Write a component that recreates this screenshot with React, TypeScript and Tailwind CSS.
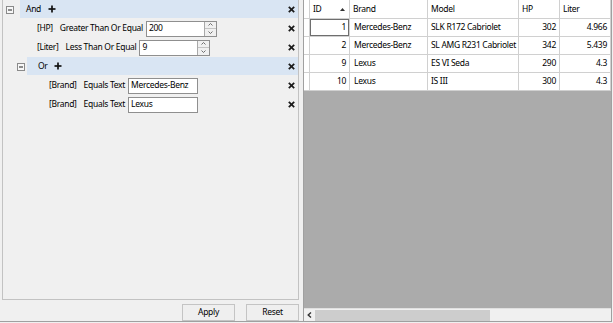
import React from "react";

const font = "font-['Noto_Sans',sans-serif] text-[8.5px] tracking-[-0.3px] text-black";

function Expand() {
  return (
    <svg width="8" height="8" viewBox="0 0 8 8">
      <rect x="0.5" y="0.5" width="7" height="7" fill="#f7f7f7" stroke="#8a8a8a" />
      <line x1="2" y1="4" x2="6" y2="4" stroke="#222" strokeWidth="1" />
    </svg>
  );
}

function Plus() {
  return (
    <svg width="8" height="8" viewBox="0 0 8 8">
      <line x1="4" y1="0.5" x2="4" y2="7.5" stroke="#111" strokeWidth="1.7" />
      <line x1="0.5" y1="4" x2="7.5" y2="4" stroke="#111" strokeWidth="1.7" />
    </svg>
  );
}

function Close() {
  return (
    <svg width="7" height="7" viewBox="0 0 7 7" className="ml-auto mr-[3px] shrink-0">
      <line x1="0.8" y1="0.8" x2="6.2" y2="6.2" stroke="#1a1a1a" strokeWidth="1.7" />
      <line x1="6.2" y1="0.8" x2="0.8" y2="6.2" stroke="#1a1a1a" strokeWidth="1.7" />
    </svg>
  );
}

function TextBox({ value }: { value: string }) {
  return (
    <div className="w-[70px] h-[16px] border border-[#8f8f8f] bg-white flex items-center pl-[2px] overflow-hidden whitespace-nowrap">
      {value}
    </div>
  );
}

function Spin({ value }: { value: string }) {
  return (
    <div className="w-[71px] h-[16px] border border-[#8f8f8f] bg-white flex">
      <div className="flex-1 flex items-center pl-[2px]">{value}</div>
      <div className="w-[12px] border-l border-[#a9a9a9] flex flex-col bg-[#f0f0f0]">
        <div className="flex-1 border-b border-[#c4c4c4] flex items-center justify-center">
          <svg width="5" height="3" viewBox="0 0 5 3">
            <polyline points="0.5,2.5 2.5,0.5 4.5,2.5" fill="none" stroke="#606060" strokeWidth="0.9" />
          </svg>
        </div>
        <div className="flex-1 flex items-center justify-center">
          <svg width="5" height="3" viewBox="0 0 5 3">
            <polyline points="0.5,0.5 2.5,2.5 4.5,0.5" fill="none" stroke="#606060" strokeWidth="0.9" />
          </svg>
        </div>
      </div>
    </div>
  );
}

function GroupRow({ label, indent, iconPad, textPad, plusGap }: { label: string; indent: number; iconPad: number; textPad: number; plusGap: number }) {
  return (
    <div className="h-[19px] flex">
      <div className="flex items-center h-[19px]" style={{ width: indent, paddingLeft: iconPad }}>
        <Expand />
      </div>
      <div className="flex-1 h-[18px] bg-[#d9e5f3] flex items-center" style={{ paddingLeft: textPad }}>
        <span>{label}</span>
        <span className="flex items-center" style={{ marginLeft: plusGap }}>
          <Plus />
        </span>
        <Close />
      </div>
    </div>
  );
}

function CondRow({ pad, field, op, children }: { pad: number; field: string; op: string; children: React.ReactNode }) {
  return (
    <div className="h-[19px] flex items-center" style={{ paddingLeft: pad }}>
      <span>{field}</span>
      <span className="ml-[7px]">{op}</span>
      <div className="ml-[3px]">{children}</div>
      <Close />
    </div>
  );
}

const data = [
  { id: 1, brand: "Mercedes-Benz", model: "SLK R172 Cabriolet", hp: 302, liter: "4.966" },
  { id: 2, brand: "Mercedes-Benz", model: "SL AMG R231 Cabriolet", hp: 342, liter: "5.439" },
  { id: 9, brand: "Lexus", model: "ES VI Seda", hp: 290, liter: "4.3" },
  { id: 10, brand: "Lexus", model: "IS III", hp: 300, liter: "4.3" },
];

const line = "border-[#d0d0d0]";

export default function App() {
  return (
    <div className={`w-[613px] h-[323px] bg-[#f0f0f0] ${font}`}>
      <div className="w-[612px] h-[322px] border-r border-b border-[#a0a0a0] flex">
        {/* Left filter side */}
        <div className="w-[299px] h-full pl-[2px] flex flex-col">
          <div className="h-[300px] border-l border-r border-b border-[#c2c2c2] flex flex-col">
            <GroupRow label="And" indent={17} iconPad={3} textPad={6} plusGap={7} />
            <CondRow pad={34} field="[HP]" op="Greater Than Or Equal">
              <Spin value="200" />
            </CondRow>
            <CondRow pad={34} field="[Liter]" op="Less Than Or Equal">
              <Spin value="9" />
            </CondRow>
            <GroupRow label="Or" indent={24} iconPad={14} textPad={11} plusGap={6} />
            <CondRow pad={46} field="[Brand]" op="Equals Text">
              <TextBox value="Mercedes-Benz" />
            </CondRow>
            <CondRow pad={46} field="[Brand]" op="Equals Text">
              <TextBox value="Lexus" />
            </CondRow>
          </div>
          <div className="flex-1 flex justify-end gap-[11px] pt-[4px]">
            <button className="w-[53px] h-[17px] border border-[#c4c4c4] bg-[#efefef] flex items-center justify-center">Apply</button>
            <button className="w-[53px] h-[17px] border border-[#c4c4c4] bg-[#efefef] flex items-center justify-center">Reset</button>
          </div>
        </div>
        <div className="w-[4px]" />
        {/* Grid */}
        <div className="w-[308px] h-[321px] border-l border-[#a0a0a0] flex flex-col bg-[#ababab]">
          <div className="bg-white">
            <div className={`flex h-[19px] border-b ${line}`}>
              <div className={`w-[6px] border-r ${line}`} />
              <div className={`w-[40px] border-r ${line} flex items-center justify-between pl-[3px] pr-[4px]`}>
                <span>ID</span>
                <svg width="5" height="3" viewBox="0 0 5 3"><polygon points="0,3 2.5,0 5,3" fill="#333" /></svg>
              </div>
              <div className={`w-[78px] border-r ${line} flex items-center pl-[3px]`}>Brand</div>
              <div className={`w-[91px] border-r ${line} flex items-center pl-[3px]`}>Model</div>
              <div className={`w-[41px] border-r ${line} flex items-center pl-[3px]`}>HP</div>
              <div className={`w-[51px] border-r ${line} flex items-center pl-[3px]`}>Liter</div>
            </div>
            {data.map((r, i) => (
              <div key={r.id} className={`flex h-[18px] border-b ${line}`}>
                <div className={`w-[6px] border-r ${line}`} />
                <div className={`w-[40px] border-r ${line} flex items-center justify-end pr-[3px] ${i === 0 ? "shadow-[inset_0_0_0_1px_#6e6e6e]" : ""}`}>{r.id}</div>
                <div className={`w-[78px] border-r ${line} flex items-center pl-[4px] whitespace-nowrap`}>{r.brand}</div>
                <div className={`w-[91px] border-r ${line} flex items-center pl-[3px] whitespace-nowrap overflow-hidden`}>{r.model}</div>
                <div className={`w-[41px] border-r ${line} flex items-center justify-end pr-[3px]`}>{r.hp}</div>
                <div className={`w-[51px] border-r ${line} flex items-center justify-end pr-[3px]`}>{r.liter}</div>
              </div>
            ))}
          </div>
          <div className="flex-1" />
          <div className="h-[13px] bg-[#f0f0f0] border-t border-[#e0e0e0] flex items-center">
            <div className="w-[11px] h-[12px] flex items-center justify-center">
              <svg width="5" height="6" viewBox="0 0 5 6"><polyline points="4,0.5 1.2,3 4,5.5" fill="none" stroke="#333" strokeWidth="1.4" /></svg>
            </div>
            <div className="w-[175px] h-[11px] bg-[#cdcdcd]" />
          </div>
        </div>
      </div>
    </div>
  );
}
